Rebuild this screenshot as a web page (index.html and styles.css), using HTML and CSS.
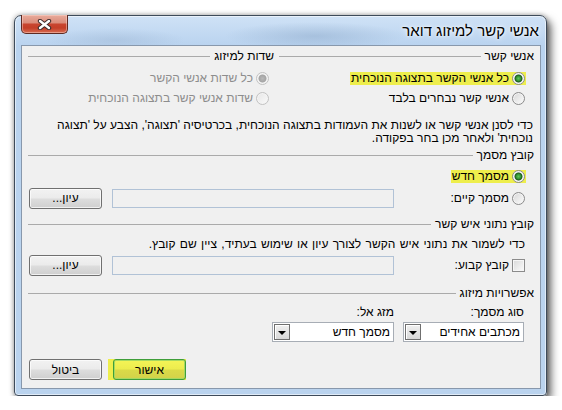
FILE: index.html
```html
<!DOCTYPE html>
<html lang="he">
<head>
  <meta charset="utf-8">
  <title>אנשי קשר למיזוג דואר</title>
  <link rel="stylesheet" href="styles.css">
</head>
<body>
  <div class="window" dir="rtl">
    <div class="titlebar">
      <span class="title">אנשי קשר למיזוג דואר</span>
      <button class="close-btn" type="button">
        <svg width="15" height="11" viewBox="0 0 15 11">
          <path d="M3 2 L12 9 M12 2 L3 9" stroke="#3b2a2a" stroke-width="4.4" stroke-linecap="round"/>
          <path d="M3 2 L12 9 M12 2 L3 9" stroke="#fff" stroke-width="2.4" stroke-linecap="round"/>
        </svg>
      </button>
    </div>

    <div class="client">
      <div class="two-cols">
        <div class="col col-right">
          <div class="group-head"><span>אנשי קשר</span></div>
          <div class="opt"><span class="hl"><span class="radio checked"></span>כל אנשי הקשר בתצוגה הנוכחית</span></div>
          <div class="opt"><span class="radio"></span>אנשי קשר נבחרים בלבד</div>
        </div>
        <div class="col col-left disabled">
          <div class="group-head"><span>שדות למיזוג</span></div>
          <div class="opt"><span class="radio checked"></span>כל שדות אנשי הקשר</div>
          <div class="opt"><span class="radio"></span>שדות אנשי קשר בתצוגה הנוכחית</div>
        </div>
      </div>

      <p class="note">כדי לסנן אנשי קשר או לשנות את העמודות בתצוגה הנוכחית, בכרטיסיה 'תצוגה', הצבע על 'תצוגה<br>נוכחית' ולאחר מכן בחר בפקודה.</p>

      <div class="group-head sec-doc"><span>קובץ מסמך</span></div>
      <div class="opt opt-doc"><span class="hl"><span class="radio checked"></span>מסמך חדש</span></div>
      <div class="file-row">
        <div class="file-label"><span class="radio"></span>מסמך קיים:</div>
        <div class="textbox"></div>
        <button class="btn" type="button">עיון...</button>
      </div>

      <div class="group-head sec-data"><span>קובץ נתוני איש קשר</span></div>
      <p class="note note-data">כדי לשמור את נתוני איש הקשר לצורך עיון או שימוש בעתיד, ציין שם קובץ.</p>
      <div class="file-row file-row-data">
        <div class="file-label"><span class="checkbox"></span>קובץ קבוע:</div>
        <div class="textbox"></div>
        <button class="btn" type="button">עיון...</button>
      </div>

      <div class="group-head sec-merge"><span>אפשרויות מיזוג</span></div>
      <div class="merge-opts">
        <div class="field field-type">
          <div class="field-label">סוג מסמך:</div>
          <div class="select"><span>מכתבים אחידים</span><span class="arrow"></span></div>
        </div>
        <div class="field field-to">
          <div class="field-label">מזג אל:</div>
          <div class="select"><span>מסמך חדש</span><span class="arrow"></span></div>
        </div>
      </div>

      <div class="actions">
        <span class="ok-wrap"><button class="btn btn-ok" type="button">אישור</button></span>
        <button class="btn" type="button">ביטול</button>
      </div>
    </div>
  </div>
</body>
</html>
```

FILE: styles.css
```css
body {
  margin: 0;
  background-color: #fff;
  font-family: "Liberation Sans", Arial, sans-serif;
  font-size: 12px;
  color: #000;
}
.window {
  box-sizing: border-box;
  width: 533px;
  height: 381px;
  margin: 15px 0 0 14px;
  padding: 0 5px 6px 6px;
  border: 1px solid #3e4b5a;
  border-radius: 7px 7px 4px 4px;
  background:
    radial-gradient(ellipse 90px 14px at 300px 20px, rgba(120,150,185,0.35), transparent),
    radial-gradient(ellipse 70px 12px at 100px 24px, rgba(140,165,195,0.3), transparent),
    linear-gradient(180deg, #cfe2f6 0, #b9d3ef 30px, #bad3ee 100%);
  box-shadow: inset 0 0 0 1px rgba(255,255,255,0.55), 0 0 5px rgba(0,0,0,0.35), 4px 5px 8px rgba(0,0,0,0.6);
}
.titlebar {
  display: flex;
  justify-content: space-between;
  align-items: flex-start;
  height: 29px;
  margin: 0 -5px 0 -6px;
}
.title {
  padding: 6px 7px 0 0;
  font-size: 15px;
  line-height: 18px;
  text-shadow: 0 0 6px #fff, 0 0 3px #fff;
}
.close-btn {
  box-sizing: border-box;
  width: 47px;
  height: 19px;
  margin: -1px 0 0 6px;
  padding: 0;
  border: 1px solid #5e2a22;
  border-top: none;
  border-radius: 0 0 5px 5px;
  background: linear-gradient(180deg, #e8ab9c 0%, #db8e7c 42%, #c8452f 52%, #c43f28 72%, #d86c52 100%);
  box-shadow: inset 0 0 0 1px rgba(255,220,210,0.45);
  display: flex;
  align-items: center;
  justify-content: center;
}
.close-btn svg {
  display: block;
}
.client {
  box-sizing: border-box;
  height: 344px;
  padding: 3px 6px 0 6px;
  border: 1px solid #8898ac;
  background-color: #f0f0f0;
}
.two-cols {
  display: grid;
  grid-template-columns: 255px 251px;
}
.group-head {
  display: flex;
  align-items: center;
  height: 14px;
  line-height: 14px;
  color: #000;
}
.group-head::after {
  content: "";
  flex: 1;
  margin-inline-start: 4px;
  border-top: 1px solid #aaaaaa;
}
.col-left .group-head {
  padding-right: 5px;
}
.opt {
  display: flex;
  align-items: center;
  height: 20px;
  padding-right: 9px;
}
.col .group-head + .opt {
  margin-top: 5px;
}
.col-left .opt {
  padding-right: 10px;
}
.disabled .opt {
  color: #8d8d8d;
}
.hl {
  display: inline-flex;
  align-items: center;
  height: 13px;
  padding: 0 1px;
  margin-right: -1px;
  background-color: #eeee4c;
}
.radio {
  box-sizing: border-box;
  flex: none;
  width: 13px;
  height: 13px;
  margin-left: 3px;
  border: 1px solid #8b8b8b;
  border-radius: 50%;
  background: linear-gradient(135deg, #d6d6d6, #fdfdfd);
  box-shadow: inset 0 0 0 1px #f4f4f4;
}
.radio.checked {
  background: radial-gradient(circle at 50% 50%, #5cc25c 0, #3a9c3a 2px, #1c5c1c 3.5px, #f2f2f2 4.5px, #fdfdfd 6px);
}
.disabled .radio {
  border-color: #c2c2c2;
  background: linear-gradient(135deg, #e6e6e6, #fafafa);
}
.disabled .radio.checked {
  background: radial-gradient(circle at 50% 50%, #b9b9b9 0, #a5a5a5 3.5px, #f2f2f2 4.5px, #fafafa 6px);
}
.note {
  margin: 11px 0 0 0;
  padding-right: 1px;
  line-height: 13px;
}
.sec-doc {
  margin-top: 3px;
}
.opt-doc {
  margin-top: 4px;
}
.file-row {
  display: flex;
  align-items: center;
  height: 22px;
  margin-top: 1px;
}
.file-label {
  flex: 1;
  display: flex;
  align-items: center;
  padding-right: 9px;
}
.textbox {
  box-sizing: border-box;
  width: 282px;
  height: 19px;
  margin-left: 10px;
  border: 1px solid #b1c2d6;
  background-color: #f0f0f0;
}
.btn {
  box-sizing: border-box;
  width: 73px;
  height: 21px;
  margin-left: 1px;
  padding: 0;
  border: 1px solid #707070;
  border-radius: 3px;
  background: linear-gradient(180deg, #f2f2f2 0%, #ebebeb 48%, #dddddd 52%, #cfcfcf 100%);
  box-shadow: inset 0 0 0 1px rgba(255,255,255,0.7);
  font-family: "Liberation Sans", Arial, sans-serif;
  font-size: 12px;
  color: #000;
}
.sec-data {
  margin-top: 8px;
}
.note-data {
  margin-top: 7px;
  padding-right: 9px;
  word-spacing: 1px;
}
.file-row-data {
  margin-top: 3px;
}
.checkbox {
  box-sizing: border-box;
  flex: none;
  width: 13px;
  height: 13px;
  margin-left: 3px;
  border: 1px solid #8b8b8b;
  background: linear-gradient(135deg, #d9d9d9, #fbfbfb);
  box-shadow: inset 0 0 0 1px #f6f6f6;
}
.sec-merge {
  margin-top: 10px;
}
.merge-opts {
  display: flex;
  gap: 9px;
  margin-top: 5px;
  padding-right: 10px;
}
.field-type {
  width: 121px;
}
.field-to {
  width: 122px;
}
.field-label {
  height: 14px;
  line-height: 14px;
  margin-bottom: 3px;
}
.select {
  box-sizing: border-box;
  display: flex;
  align-items: center;
  justify-content: space-between;
  height: 20px;
  padding: 0 3px 0 1px;
  border: 1px solid #a7adb5;
  background-color: #fff;
}
.arrow {
  box-sizing: border-box;
  position: relative;
  width: 16px;
  height: 16px;
  border: 1px solid #6f6f6f;
  background: linear-gradient(180deg, #f0f0f0, #d8d8d8);
  box-shadow: inset 1px 1px 0 #fff;
}
.arrow::after {
  content: "";
  position: absolute;
  left: 3px;
  top: 6px;
  border-left: 4px solid transparent;
  border-right: 4px solid transparent;
  border-top: 4px solid #000;
}
.actions {
  display: flex;
  justify-content: flex-end;
  gap: 6px;
  margin-top: 17px;
}
.ok-wrap {
  display: flex;
  padding-left: 5px;
  background-color: #eeee4c;
}
.ok-wrap .btn {
  margin-left: 0;
}
.btn-ok {
  border-color: #3f9e3a;
  background: linear-gradient(180deg, #f4f456 0%, #ecec4e 48%, #dada48 52%, #d2d24a 100%);
  box-shadow: inset 0 0 0 1px #a6d860;
}
```
